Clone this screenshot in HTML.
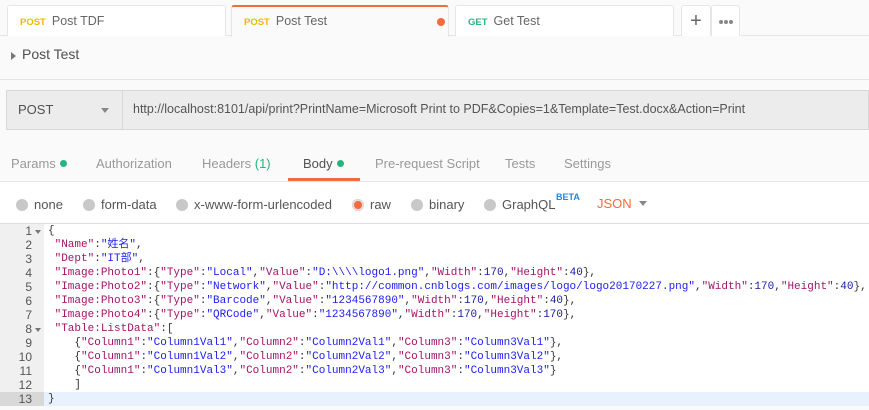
<!DOCTYPE html>
<html><head><meta charset="utf-8"><style>
*{margin:0;padding:0;box-sizing:border-box}
body{width:869px;height:410px;overflow:hidden;background:#fafafa;font-family:"Liberation Sans",sans-serif;position:relative;color:#505050}
.abs{position:absolute}
.tab{position:absolute;top:5px;height:31px;background:#fff;border:1px solid #e6e6e6;border-bottom:none;border-radius:3px 3px 0 0;font-size:12.5px;line-height:30px;padding-left:12px;color:#666}
.m{font-weight:bold;font-size:9.5px;margin-right:6px}
.code{position:absolute;left:0;top:224px;width:869px;height:186px;background:#fff;font-family:"Liberation Mono","Noto Sans CJK SC",monospace;font-size:11px;line-height:14px}
.gut{position:absolute;left:0;top:0;width:44px;height:186px;background:#f0f0f0}
.ln{position:absolute;left:0;width:32px;height:14px;line-height:14px;text-align:right;color:#555;font-size:12px;font-family:"Liberation Sans",sans-serif}
.cl{position:absolute;left:48px;height:14px;line-height:14px;white-space:pre;color:#333}
.k{color:#a11566}.s{color:#1d1df0}.n{color:#1a1aa6}
.rad{display:inline-block;width:12px;height:12px;border-radius:50%;background:#c8c8c8;vertical-align:-2px;margin-right:6px}
.ropt{position:absolute;top:197px;font-size:13px;color:#555}
.rt{position:absolute;top:156px;font-size:13px;color:#999}
.dot{display:inline-block;width:7px;height:7px;border-radius:50%;background:#26b47f;margin-left:4px;vertical-align:1px}
</style></head><body>
<div class="abs" style="left:0;top:35px;width:869px;height:1px;background:#e6e6e6"></div>
<div class="tab" style="left:7px;width:219px"><span class="m" style="color:#f4b400">POST</span>Post TDF</div>
<div class="tab" style="left:231px;width:218px;background:#fafafa;border-top:2px solid #f26b3a;height:32px;line-height:28px"><span class="m" style="color:#f4b400">POST</span>Post Test<span class="abs" style="left:205px;top:11px;width:8px;height:8px;border-radius:50%;background:#f26b3a"></span></div>
<div class="tab" style="left:455px;width:219px"><span class="m" style="color:#26b47f">GET</span>Get Test</div>
<div class="tab" style="left:681px;width:30px;padding:0;text-align:center;font-size:20px;color:#666">+</div>
<div class="tab" style="left:711px;width:29px;padding:0"><span class="abs" style="left:7px;top:14px;width:4px;height:4px;border-radius:50%;background:#888;box-shadow:5px 0 0 #888,10px 0 0 #888"></span></div>
<div class="abs" style="left:11px;top:52px;width:0;height:0;border-top:4px solid transparent;border-bottom:4px solid transparent;border-left:5px solid #777"></div>
<div class="abs" style="left:22px;top:46px;font-size:14px;color:#505050">Post Test</div>
<div class="abs" style="left:0;top:79px;width:869px;height:1px;background:#e6e6e6"></div>
<div class="abs" style="left:6px;top:90px;width:863px;height:40px;background:#ececec;border:1px solid #d8d8d8"></div>
<div class="abs" style="left:122px;top:90px;width:1px;height:40px;background:#d8d8d8"></div>
<div class="abs" style="left:18px;top:102px;font-size:13px;color:#505050">POST</div>
<div class="abs" style="left:101px;top:108px;width:0;height:0;border-left:4px solid transparent;border-right:4px solid transparent;border-top:5px solid #888"></div>
<div class="abs" style="left:133px;top:102px;font-size:12.5px;color:#555;white-space:nowrap">http://localhost:8101/api/print?PrintName=Microsoft Print to PDF&amp;Copies=1&amp;Template=Test.docx&amp;Action=Print</div>
<div class="abs" style="left:0;top:181px;width:869px;height:1px;background:#e6e6e6"></div>
<div class="rt" style="left:11px">Params<span class="dot"></span></div>
<div class="rt" style="left:96px">Authorization</div>
<div class="rt" style="left:202px">Headers <span style="color:#26b47f">(1)</span></div>
<div class="rt" style="left:303px;color:#505050">Body<span class="dot"></span></div>
<div class="abs" style="left:288px;top:178px;width:72px;height:3px;background:#f26b3a"></div>
<div class="rt" style="left:375px">Pre-request Script</div>
<div class="rt" style="left:505px">Tests</div>
<div class="rt" style="left:564px">Settings</div>
<div class="abs" style="left:0;top:182px;width:869px;height:41px;background:#fff"></div>
<div class="ropt" style="left:16px"><span class="rad"></span>none</div>
<div class="ropt" style="left:83px"><span class="rad"></span>form-data</div>
<div class="ropt" style="left:176px"><span class="rad"></span>x-www-form-urlencoded</div>
<div class="ropt" style="left:352px"><span class="rad" style="background:#f26b3a;box-shadow:inset 0 0 0 2px #ddd"></span>raw</div>
<div class="ropt" style="left:411px"><span class="rad"></span>binary</div>
<div class="ropt" style="left:484px"><span class="rad"></span>GraphQL</div>
<div class="abs" style="left:556px;top:192px;font-size:9px;font-weight:bold;color:#1e88e5">BETA</div>
<div class="abs" style="left:597px;top:196px;font-size:13px;color:#f26b3a">JSON</div>
<div class="abs" style="left:639px;top:201px;width:0;height:0;border-left:4px solid transparent;border-right:4px solid transparent;border-top:5px solid #888"></div>
<div class="abs" style="left:0;top:223px;width:869px;height:1px;background:#e0e0e0"></div>
<div class="code">
<div class="gut"></div>
<div class="abs" style="left:0;top:168px;width:44px;height:14px;background:#d8d8d8"></div>
<div class="abs" style="left:44px;top:168px;width:825px;height:14px;background:#e8f2ff"></div>
<div class="abs" style="left:44px;top:182px;width:825px;height:4px;background:#fafafa"></div>
<div class="abs" style="left:0;top:182px;width:44px;height:4px;background:#fafafa"></div>
<div class="ln" style="top:0">1</div><div class="ln" style="top:14px">2</div><div class="ln" style="top:28px">3</div><div class="ln" style="top:42px">4</div><div class="ln" style="top:56px">5</div><div class="ln" style="top:70px">6</div><div class="ln" style="top:84px">7</div><div class="ln" style="top:98px">8</div><div class="ln" style="top:112px">9</div><div class="ln" style="top:126px">10</div><div class="ln" style="top:140px">11</div><div class="ln" style="top:154px">12</div><div class="ln" style="top:168px">13</div>
<div class="abs" style="left:35px;top:6px;border-left:3px solid transparent;border-right:3px solid transparent;border-top:4px solid #777"></div>
<div class="abs" style="left:35px;top:104px;border-left:3px solid transparent;border-right:3px solid transparent;border-top:4px solid #777"></div>
<div class="cl" style="top:0">{</div>
<div class="cl" style="top:14px"> <span class="k">"Name"</span>:<span class="s">"姓名"</span>,</div>
<div class="cl" style="top:28px"> <span class="k">"Dept"</span>:<span class="s">"IT部"</span>,</div>
<div class="cl" style="top:42px"> <span class="k">"Image:Photo1"</span>:{<span class="k">"Type"</span>:<span class="s">"Local"</span>,<span class="k">"Value"</span>:<span class="s">"D:\\\\logo1.png"</span>,<span class="k">"Width"</span>:<span class="n">170</span>,<span class="k">"Height"</span>:<span class="n">40</span>},</div>
<div class="cl" style="top:56px"> <span class="k">"Image:Photo2"</span>:{<span class="k">"Type"</span>:<span class="s">"Network"</span>,<span class="k">"Value"</span>:<span class="s">"http://common.cnblogs.com/images/logo/logo20170227.png"</span>,<span class="k">"Width"</span>:<span class="n">170</span>,<span class="k">"Height"</span>:<span class="n">40</span>},</div>
<div class="cl" style="top:70px"> <span class="k">"Image:Photo3"</span>:{<span class="k">"Type"</span>:<span class="s">"Barcode"</span>,<span class="k">"Value"</span>:<span class="s">"1234567890"</span>,<span class="k">"Width"</span>:<span class="n">170</span>,<span class="k">"Height"</span>:<span class="n">40</span>},</div>
<div class="cl" style="top:84px"> <span class="k">"Image:Photo4"</span>:{<span class="k">"Type"</span>:<span class="s">"QRCode"</span>,<span class="k">"Value"</span>:<span class="s">"1234567890"</span>,<span class="k">"Width"</span>:<span class="n">170</span>,<span class="k">"Height"</span>:<span class="n">170</span>},</div>
<div class="cl" style="top:98px"> <span class="k">"Table:ListData"</span>:[</div>
<div class="cl" style="top:112px">    {<span class="k">"Column1"</span>:<span class="s">"Column1Val1"</span>,<span class="k">"Column2"</span>:<span class="s">"Column2Val1"</span>,<span class="k">"Column3"</span>:<span class="s">"Column3Val1"</span>},</div>
<div class="cl" style="top:126px">    {<span class="k">"Column1"</span>:<span class="s">"Column1Val2"</span>,<span class="k">"Column2"</span>:<span class="s">"Column2Val2"</span>,<span class="k">"Column3"</span>:<span class="s">"Column3Val2"</span>},</div>
<div class="cl" style="top:140px">    {<span class="k">"Column1"</span>:<span class="s">"Column1Val3"</span>,<span class="k">"Column2"</span>:<span class="s">"Column2Val3"</span>,<span class="k">"Column3"</span>:<span class="s">"Column3Val3"</span>}</div>
<div class="cl" style="top:154px">    ]</div>
<div class="cl" style="top:168px">}</div>
</div>
</body></html>
